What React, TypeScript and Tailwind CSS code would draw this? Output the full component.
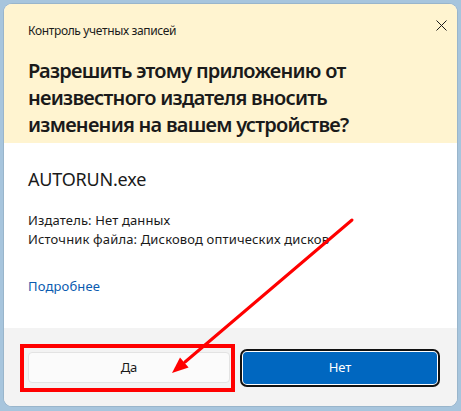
import React from 'react';

const font = { fontFamily: '"Segoe UI", "Noto Sans", "Liberation Sans", sans-serif' };

export default function App() {
  return (
    <div className="relative w-[461px] h-[411px] bg-[#a7c5dd] p-[4px] overflow-hidden" style={font}>
      {/* dialog */}
      <div className="w-[453px] h-[402px] rounded-[8px] overflow-hidden flex flex-col bg-white shadow-[0_0_0_1px_rgba(0,0,0,0.08)]">
        <div className="relative bg-[#fff4d0] px-[24px] pt-[19px] pb-[5px]">
          <p className="text-[12px] leading-[16px] tracking-[-0.35px] text-[#1b1b1b]">Контроль учетных записей</p>
          <h1 className="mt-[18px] text-[20px] leading-[27px] tracking-[-0.75px] font-semibold text-[#1a1a1a]">
            Разрешить этому приложению от неизвестного издателя вносить изменения на вашем устройстве?
          </h1>
          <button className="absolute right-[7px] top-[12px] w-[18px] h-[18px] flex items-center justify-center text-[#1a1a1a]">
            <svg width="11" height="11" viewBox="0 0 11 11">
              <path d="M0.5 0.5L10.5 10.5M10.5 0.5L0.5 10.5" stroke="currentColor" strokeWidth="1" />
            </svg>
          </button>
        </div>

        <div className="flex-1 px-[24px] pt-[24px] text-[#1a1a1a]">
          <p className="text-[18px] leading-[24px] tracking-[-0.2px]">AUTORUN.exe</p>
          <div className="mt-[20px] text-[13px] leading-[19px] tracking-[0.15px]">
            <p>Издатель: Нет данных</p>
            <p>Источник файла: Дисковод оптических дисков</p>
          </div>
          <a className="block mt-[28px] text-[13px] leading-[19px] tracking-[0.15px] text-[#0a5bb0]">Подробнее</a>
        </div>

        <div className="h-[78px] bg-[#f3f3f3] flex gap-[10px] pl-[24px] pt-[24px]">
          <button className="w-[202px] h-[31px] rounded-[4px] bg-[#fbfbfb] border border-[#e3e3e3] text-[13px] text-[#1a1a1a]">
            Да
          </button>
          <div className="w-[200px] h-[38px] -mt-[3px] rounded-[7px] border-[2px] border-[#111] p-[1px] bg-white">
            <button className="w-full h-full rounded-[4px] bg-[#0067c0] text-[13px] text-white">
              Нет
            </button>
          </div>
        </div>
      </div>

      {/* red annotation */}
      <div className="absolute left-[20px] top-[344px] w-[215px] h-[48px] border-[4px] border-[#ff0000]" />
      <svg className="absolute left-0 top-0" width="461" height="411" viewBox="0 0 461 411">
        <line x1="352" y1="220" x2="185" y2="362" stroke="#ff0000" strokeWidth="3" strokeLinecap="round" />
        <polygon points="172,373 188.6,367.6 180,357.4" fill="#ff0000" />
      </svg>
    </div>
  );
}
